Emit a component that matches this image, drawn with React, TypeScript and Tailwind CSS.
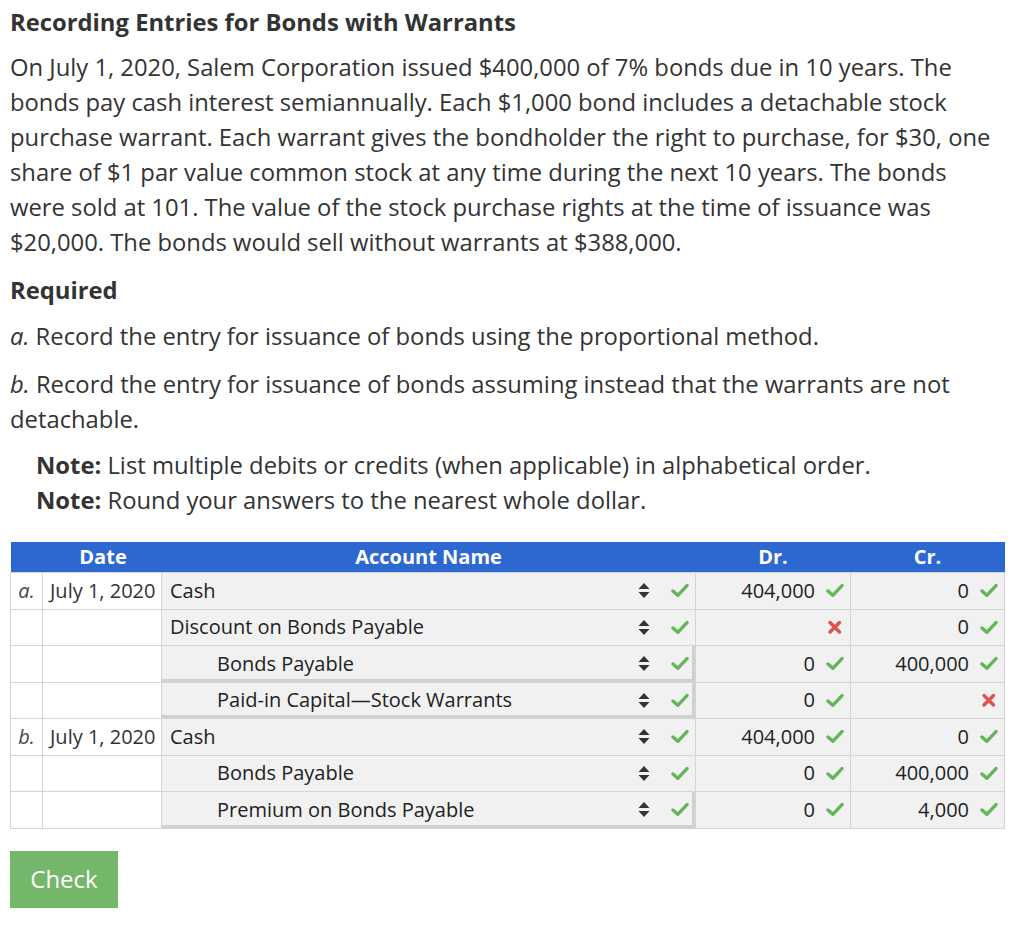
import React from "react";

type Row = {
  letter?: string;
  date?: string;
  account: string;
  indent?: boolean;
  heavy?: boolean;
  dr: string | null;
  cr: string | null;
};

const rows: Row[] = [
  { letter: "a.", date: "July 1, 2020", account: "Cash", dr: "404,000", cr: "0" },
  { account: "Discount on Bonds Payable", dr: null, cr: "0" },
  { account: "Bonds Payable", indent: true, heavy: true, dr: "0", cr: "400,000" },
  { account: "Paid-in Capital\u2014Stock Warrants", indent: true, heavy: true, dr: "0", cr: null },
  { letter: "b.", date: "July 1, 2020", account: "Cash", dr: "404,000", cr: "0" },
  { account: "Bonds Payable", indent: true, dr: "0", cr: "400,000" },
  { account: "Premium on Bonds Payable", indent: true, heavy: true, dr: "0", cr: "4,000" },
];

function CheckMark() {
  return (
    <svg width="18" height="15" viewBox="0 0 18 15" className="shrink-0">
      <path d="M2 8 L6.8 12.3 L16 2.6" fill="none" stroke="#64b55a" strokeWidth="3.4" strokeLinecap="round" strokeLinejoin="round" />
    </svg>
  );
}

function CrossMark() {
  return (
    <svg width="18" height="15" viewBox="0 0 18 15" className="shrink-0">
      <path d="M4 2.5 L13.5 12 M13.5 2.5 L4 12" fill="none" stroke="#d9534f" strokeWidth="3.4" strokeLinecap="round" />
    </svg>
  );
}

function SortArrows() {
  return (
    <svg width="12" height="17" viewBox="0 0 12 17" className="shrink-0">
      <path d="M6 1 L11.5 7 L0.5 7 Z" fill="#333" />
      <path d="M6 16 L11.5 10 L0.5 10 Z" fill="#333" />
    </svg>
  );
}

function Amount({ value }: { value: string | null }) {
  return (
    <div className="flex items-center justify-end gap-[11px] pr-[6px]">
      {value !== null ? <span>{value}</span> : null}
      {value !== null ? <CheckMark /> : <CrossMark />}
    </div>
  );
}

export default function App() {
  return (
    <div className="w-[1024px] min-h-[928px] bg-white px-[10px] text-[#333] font-['Open_Sans',sans-serif]">
      <h1 className="pt-[7px] text-[23.8px] leading-[30px] font-bold text-[#333]">
        Recording Entries for Bonds with Warrants
      </h1>
      <div className="text-[23.8px] leading-[35px]">
        <p className="mt-[13px] whitespace-nowrap">
          On July 1, 2020, Salem Corporation issued $400,000 of 7% bonds due in 10 years. The
          <br />
          bonds pay cash interest semiannually. Each $1,000 bond includes a detachable stock
          <br />
          purchase warrant. Each warrant gives the bondholder the right to purchase, for $30, one
          <br />
          share of $1 par value common stock at any time during the next 10 years. The bonds
          <br />
          were sold at 101. The value of the stock purchase rights at the time of issuance was
          <br />
          $20,000. The bonds would sell without warrants at $388,000.
        </p>
        <p className="mt-[13px] font-bold">Required</p>
        <p className="mt-[11px]">
          <i>a.</i> Record the entry for issuance of bonds using the proportional method.
        </p>
        <p className="mt-[13px] whitespace-nowrap">
          <i>b.</i> Record the entry for issuance of bonds assuming instead that the warrants are not
          <br />
          detachable.
        </p>
        <div className="mt-[11px] pl-[26px]">
          <p>
            <b>Note:</b> List multiple debits or credits (when applicable) in alphabetical order.
          </p>
          <p>
            <b>Note:</b> Round your answers to the nearest whole dollar.
          </p>
        </div>
      </div>

      <table className="mt-[24px] w-[994px] table-fixed border-collapse text-[20px] text-[#222]">
        <colgroup>
          <col className="w-[32px]" />
          <col className="w-[119px]" />
          <col className="w-[534px]" />
          <col className="w-[155px]" />
          <col className="w-[154px]" />
        </colgroup>
        <thead>
          <tr className="h-[30px] bg-[#2d67d0] text-white">
            <th colSpan={2} className="text-center font-bold pl-[34px]">Date</th>
            <th className="text-center font-bold">Account Name</th>
            <th className="text-center font-bold">Dr.</th>
            <th className="text-center font-bold">Cr.</th>
          </tr>
        </thead>
        <tbody>
          {rows.map((r, i) => (
            <tr key={i} className="h-[36.5px]">
              <td className="border border-[#d4d4d4] text-center italic text-[#444]">{r.letter ?? ""}</td>
              <td className="border border-[#d4d4d4] pl-[7px] text-[#333] whitespace-nowrap">{r.date ?? ""}</td>
              <td
                className={
                  "border border-[#d4d4d4] bg-[#f1f1f1] p-0 " +
                  (r.heavy ? "shadow-[inset_-3px_-3px_0_#d0d0d0]" : "")
                }
              >
                <div className="flex items-center pr-[6px]">
                  <span className={r.indent ? "pl-[55px] flex-1" : "pl-[8px] flex-1"}>{r.account}</span>
                  <SortArrows />
                  <span className="w-[21px]" />
                  <CheckMark />
                </div>
              </td>
              <td className="border border-[#d4d4d4] bg-[#f1f1f1]">
                <Amount value={r.dr} />
              </td>
              <td className="border border-[#d4d4d4] bg-[#f1f1f1]">
                <Amount value={r.cr} />
              </td>
            </tr>
          ))}
        </tbody>
      </table>

      <button
        type="button"
        className="mt-[22px] h-[57px] w-[108px] bg-[#75b76a] text-white text-[24px]"
      >
        Check
      </button>
    </div>
  );
}
